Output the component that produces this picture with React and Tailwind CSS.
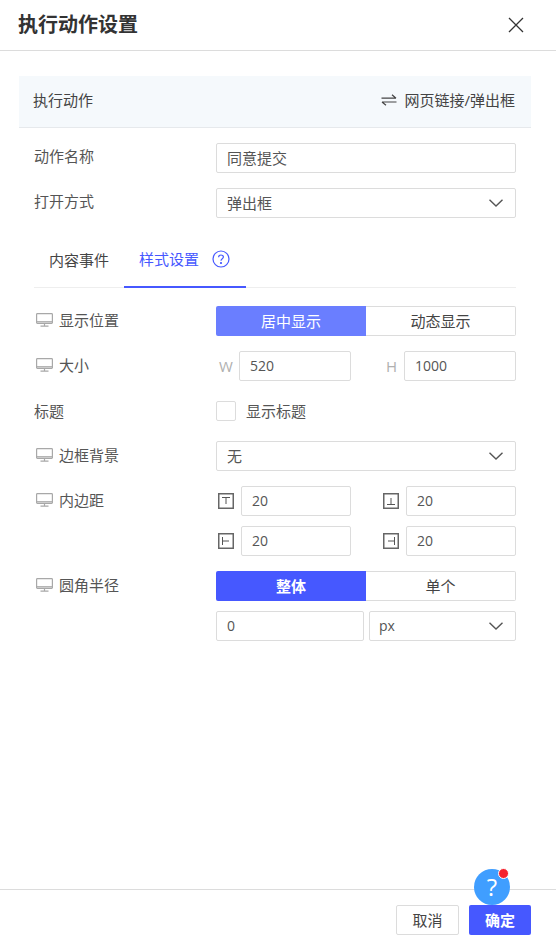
import React from "react";

const Monitor = () => (
  <svg width="17" height="14" viewBox="0 0 17 14" fill="none" stroke="#a8a8a8" strokeWidth="1.2" className="shrink-0">
    <rect x="0.6" y="0.6" width="15.8" height="9.8" rx="0.8" />
    <path d="M0.6 8.8H16.4" strokeWidth="1.3" />
    <path d="M8.5 10.5V13M4.5 13.2H12.5" />
  </svg>
);

const Chevron = () => (
  <svg width="14" height="8" viewBox="0 0 14 8" fill="none" stroke="#555" strokeWidth="1.4" className="shrink-0">
    <path d="M0.5 0.8L7 7L13.5 0.8" />
  </svg>
);

const Label = ({ icon, short, children }) => (
  <div className={"w-[182px] shrink-0 flex items-center gap-[6px] text-[#555] " + (short ? "h-[26px]" : "h-[28px]") + (icon ? " pl-[2px]" : "")}>
    {icon && <Monitor />}
    <span>{children}</span>
  </div>
);

const Box = ({ className = "", children }) => (
  <div className={"h-[30px] border border-[#dcdcdc] rounded-[2px] bg-white flex items-center text-[#555] " + className}>
    {children}
  </div>
);

const Select = ({ value, className = "w-full" }) => (
  <Box className={"pl-[10px] pr-[12px] justify-between " + className}>
    <span>{value}</span>
    <Chevron />
  </Box>
);

const Seg = ({ active, bg, children }) => (
  <div
    className={
      "w-[150px] h-[30px] flex items-center justify-center " +
      (active ? `${bg} text-white rounded-l-[2px]` : "border border-[#dcdcdc] border-l-0 rounded-r-[2px] text-[#444]")
    }
  >
    {children}
  </div>
);

const PadIcon = ({ d }) => (
  <svg width="16" height="16" viewBox="0 0 16 16" fill="none" className="shrink-0">
    <rect x="0.75" y="0.75" width="14.5" height="14.5" stroke="#666" strokeWidth="1.5" />
    <path d={d} stroke="#555" strokeWidth="1" />
  </svg>
);

const PadField = ({ d }) => (
  <div className="flex items-center justify-between w-[135px]">
    <span className="ml-[2px]"><PadIcon d={d} /></span>
    <Box className="w-[110px] pl-[10px] text-[14px]">20</Box>
  </div>
);

export default function App() {
  return (
    <div className="relative w-[556px] h-[950px] bg-white flex flex-col overflow-hidden text-[15px] leading-[20px] font-['Open_Sans','Noto_Sans_CJK_SC',sans-serif]">
      <header className="h-[51px] shrink-0 border-b border-[#dcdcdc] flex items-center justify-between pl-[18px] pr-[32px]">
        <h1 className="text-[20px] font-bold text-[#333]">执行动作设置</h1>
        <svg width="16" height="16" viewBox="0 0 16 16" fill="none" stroke="#333" strokeWidth="1.3">
          <path d="M1 1L15 15M15 1L1 15" />
        </svg>
      </header>

      <main className="flex-1 pt-[25px]">
        <div className="mx-[19px] w-[512px] h-[52px] bg-[#f5f9fc] border-b border-[#e6e9ec] flex items-center justify-between pl-[14px] pr-[16px] pb-[3px] text-[#444]">
          <span>执行动作</span>
          <span className="flex items-center gap-[7px]">
            <svg width="16" height="12" viewBox="0 0 16 12" fill="none" stroke="#444" strokeWidth="1.2">
              <path d="M0.5 4.2H15M15 4.2L11 0.8M15.5 8H1M1 8L5 11.2" />
            </svg>
            网页链接/弹出框
          </span>
        </div>

        <div className="px-[34px] pt-[15px] flex flex-col gap-[15px]">
          <div className="flex items-start">
            <Label short>动作名称</Label>
            <Box className="w-[300px] pl-[10px]">同意提交</Box>
          </div>
          <div className="flex items-start">
            <Label short>打开方式</Label>
            <Select value="弹出框" className="w-[300px]" />
          </div>
        </div>

        <div className="mx-[34px] w-[482px] mt-[14px] h-[56px] border-b border-[#eeeeee] flex">
          <div className="w-[90px] flex items-center justify-center h-[56px] text-[#444]">内容事件</div>
          <div className="w-[122px] h-[56px] border-b-2 border-[#4658ff] flex items-center pl-[15px] gap-[13px] text-[#4658ff]">
            样式设置
            <svg width="18" height="18" viewBox="0 0 18 18" fill="none" stroke="#4658ff" strokeWidth="1.2">
              <circle cx="9" cy="9" r="8" />
              <path d="M6.6 7.2C6.6 5.8 7.7 5 9 5C10.3 5 11.4 5.8 11.4 7.1C11.4 8.7 9 8.8 9 10.7" />
              <circle cx="9" cy="13" r="0.5" fill="#4658ff" />
            </svg>
          </div>
        </div>

        <div className="px-[34px] pt-[18px] flex flex-col gap-[15px]">
          <div className="flex items-start">
            <Label icon>显示位置</Label>
            <div className="flex">
              <Seg active bg="bg-[#6a7eff]">居中显示</Seg>
              <Seg>动态显示</Seg>
            </div>
          </div>

          <div className="flex items-start">
            <Label icon>大小</Label>
            <div className="w-[300px] flex justify-between">
              <div className="flex items-center justify-between w-[135px]">
                <span className="ml-[3px] text-[#b0b0b0]">W</span>
                <Box className="w-[112px] pl-[10px] text-[14px]">520</Box>
              </div>
              <div className="flex items-center justify-between w-[130px]">
                <span className="text-[#b0b0b0]">H</span>
                <Box className="w-[112px] pl-[10px] text-[14px]">1000</Box>
              </div>
            </div>
          </div>

          <div className="flex items-center h-[30px]">
            <div className="w-[182px] shrink-0 pb-[1px] text-[#555]">标题</div>
            <div className="w-[20px] h-[20px] border border-[#dcdcdc] rounded-[2px]" />
            <span className="ml-[10px] text-[#555]">显示标题</span>
          </div>

          <div className="flex items-start">
            <Label icon>边框背景</Label>
            <Select value="无" className="w-[300px]" />
          </div>

          <div className="flex items-start">
            <Label icon>内边距</Label>
            <div className="w-[300px] flex flex-col gap-[10px]">
              <div className="flex justify-between">
                <PadField d="M4 4.5H12M8 4.5V11" />
                <PadField d="M4 11.5H12M8 5V11.5" />
              </div>
              <div className="flex justify-between">
                <PadField d="M4.5 4V12M4.5 8H11" />
                <PadField d="M11.5 4V12M5 8H11.5" />
              </div>
            </div>
          </div>

          <div className="flex items-start">
            <Label icon>圆角半径</Label>
            <div className="w-[300px] flex flex-col gap-[10px]">
              <div className="flex">
                <Seg active bg="bg-[#4658ff] font-bold">整体</Seg>
                <Seg>单个</Seg>
              </div>
              <div className="flex justify-between">
                <Box className="w-[148px] pl-[10px] text-[14px]">0</Box>
                <Box className="w-[147px] pl-[9px] pr-[12px] justify-between">
                  <span className="text-[14px]">px</span>
                  <Chevron />
                </Box>
              </div>
            </div>
          </div>
        </div>
      </main>

      <footer className="h-[61px] shrink-0 border-t border-[#dcdcdc] flex items-start justify-end gap-[10px] pt-[15px] pr-[25px]">
        <button className="w-[63px] h-[30px] pb-[1px] border border-[#dcdcdc] rounded-[2px] text-[#444]">取消</button>
        <button className="w-[62px] h-[30px] pb-[1px] bg-[#4658ff] rounded-[2px] text-white font-bold">确定</button>
      </footer>

      <div className="absolute left-[474px] top-[869px] w-[36px] h-[36px] rounded-full bg-[#409eff] flex items-center justify-center text-white text-[24px] font-medium font-['Open_Sans',sans-serif]">
        ?
        <span className="absolute left-[24px] top-[-1px] w-[11px] h-[11px] rounded-full bg-[#f5222d] border border-white" />
      </div>
    </div>
  );
}
